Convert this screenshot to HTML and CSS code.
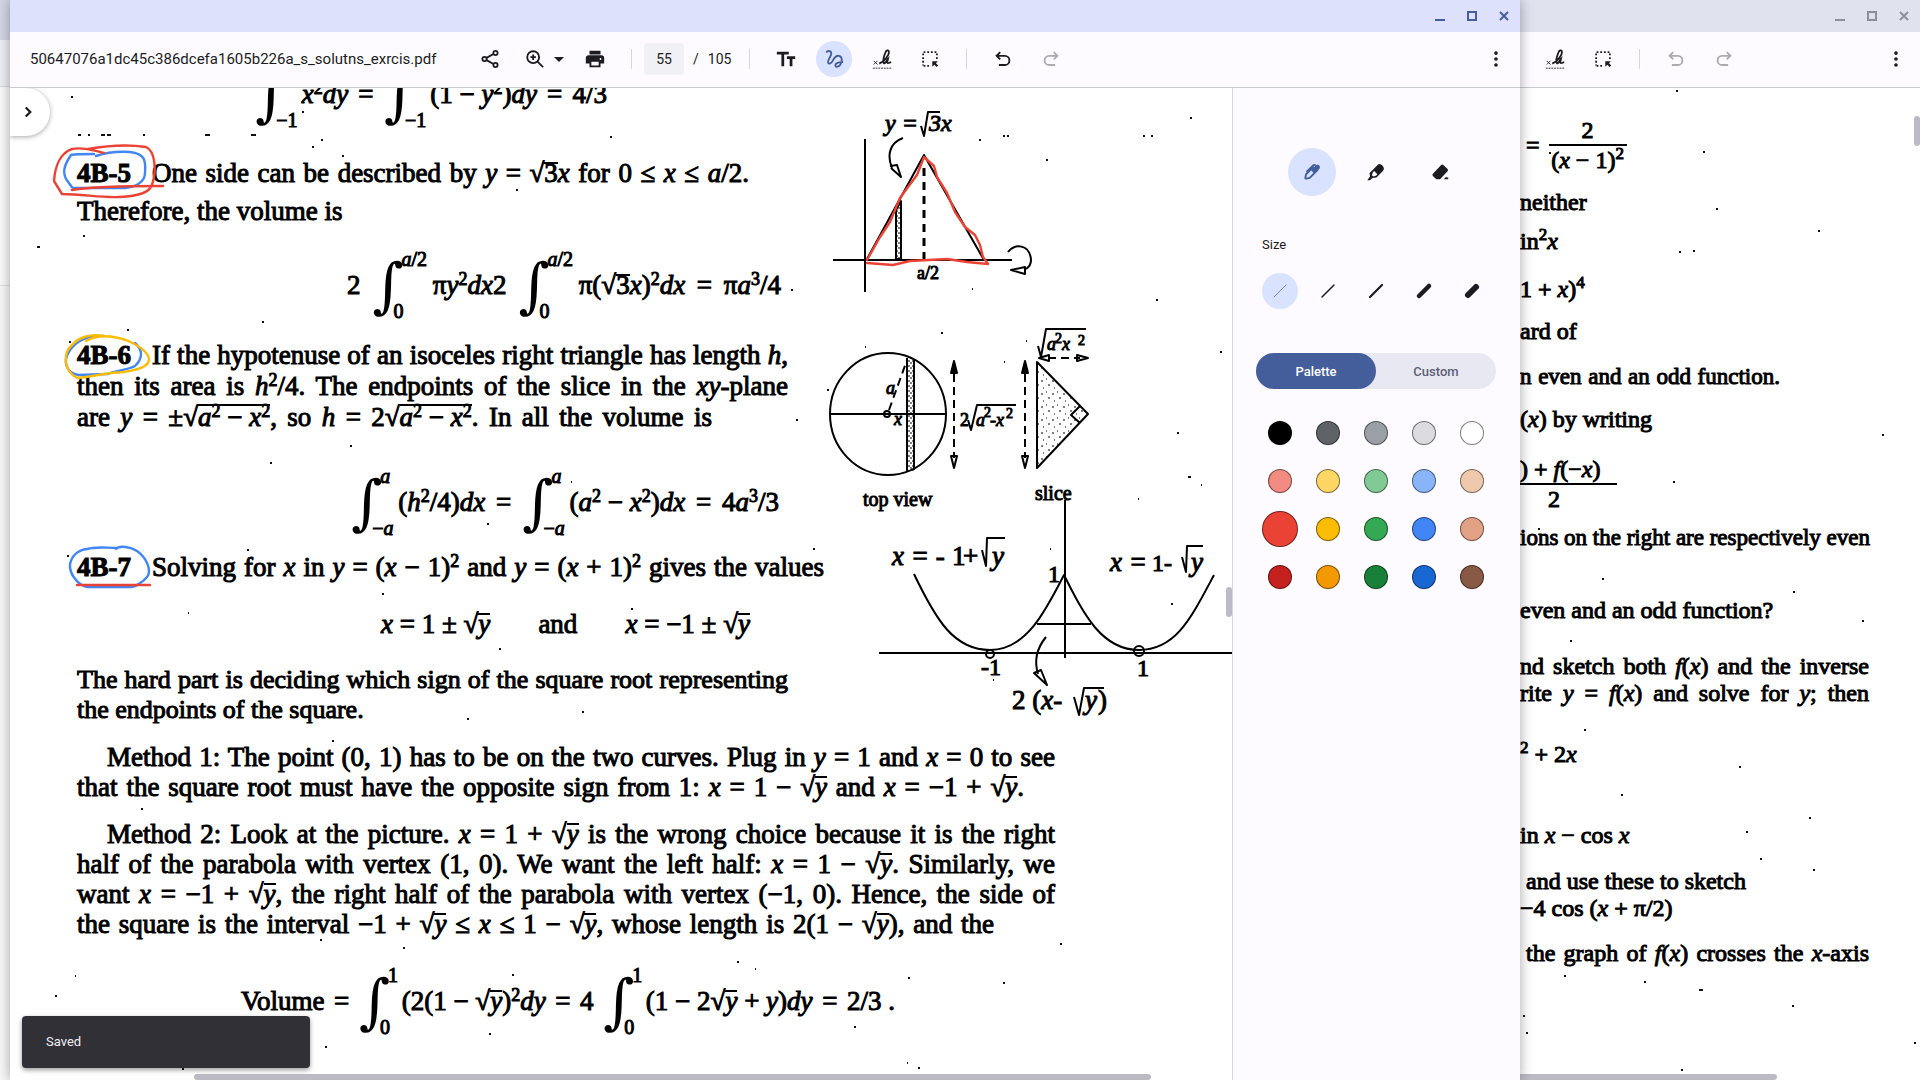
FILE: index.html
```
<!DOCTYPE html>
<html lang="en">
<head>
<meta charset="utf-8">
<title>50647076a1dc45c386dcefa1605b226a_s_solutns_exrcis.pdf</title>
<link rel="stylesheet" href="styles.css">
</head>
<body>
<svg class="defs" aria-hidden="true">
  <symbol id="i-sign" viewBox="0 0 24 24"><path d="M3 14l4 4M7 14l-4 4" stroke-width="1"/><path d="M9 17c5-2 11-9 10.500-13-.5-2.500-3-1.500-4 1.500-1.500 4-3 9-1.500 11 1.500 1 3-3 4.500-4.500-.5 2-1.500 4.500 0 4.500s1.500-.5 3.500-1" stroke-width="2"/><path d="M2 22h21" stroke-width="1" stroke-dasharray="2 1"/></symbol>
  <symbol id="i-select" viewBox="0 0 24 24"><path d="M5 4.500h15M5 19.500h8M4.500 6v13M19.500 6v7" stroke-width="2" stroke-dasharray="2 2"/><path class="solid" d="M14.500 14.500h6l-2 2 2.500 2.500-1.800 1.800-2.500-2.500-2.200 2.200z"/></symbol>
  <symbol id="i-undo" viewBox="0 0 24 24"><path d="M9 4.500L5 8.500l4 4M5.500 8.500H14a5 5 0 0 1 0 10H7.500" stroke-width="2"/></symbol>
  <symbol id="i-redo" viewBox="0 0 24 24"><path d="M15 4.500l4 4-4 4M18.500 8.500H10a5 5 0 0 0 0 10h6.500" stroke-width="2"/></symbol>
  <symbol id="i-more" viewBox="0 0 24 24"><g class="solid"><circle cx="12" cy="5.500" r="2"/><circle cx="12" cy="12" r="2"/><circle cx="12" cy="18.500" r="2"/></g></symbol>
  <symbol id="i-min" viewBox="0 0 16 16"><path d="M3 12h10" stroke-width="2"/></symbol>
  <symbol id="i-max" viewBox="0 0 16 16"><path d="M4 4h8v8H4z" stroke-width="2"/></symbol>
  <symbol id="i-close" viewBox="0 0 16 16"><path d="M4 4l8 8M12 4l-8 8" stroke-width="2"/></symbol>
</svg>

<div class="edge" aria-hidden="true"></div>

<section class="window window-back">
  <header class="titlebar">
    <button aria-label="Minimize"><svg><use href="#i-min"/></svg></button>
    <button aria-label="Maximize"><svg><use href="#i-max"/></svg></button>
    <button aria-label="Close"><svg><use href="#i-close"/></svg></button>
  </header>
  <div class="toolbar">
    <div class="group">
      <button class="tool" aria-label="Signature"><svg><use href="#i-sign"/></svg></button>
      <button class="tool" aria-label="Select"><svg><use href="#i-select"/></svg></button>
    </div>
    <span class="divider"></span>
    <div class="group">
      <button class="tool" aria-label="Undo" disabled><svg><use href="#i-undo"/></svg></button>
      <button class="tool" aria-label="Redo" disabled><svg><use href="#i-redo"/></svg></button>
    </div>
    <button class="tool more" aria-label="More"><svg><use href="#i-more"/></svg></button>
  </div>
  <main class="viewer">
    <article class="exercises">
      <p class="with-frac g28 in6"><span>=</span><span class="frac wide"><span>2</span><span>(<i>x</i> − 1)<sup>2</sup></span></span></p>
      <p class="g14">neither</p>
      <p class="g11">in<sup>2</sup><i>x</i></p>
      <p class="g20">1 + <i>x</i>)<sup>4</sup></p>
      <p class="g14">ard of</p>
      <p class="g18 fill w260 snug">n even and an odd function.</p>
      <p class="g14">(<i>x</i>) by writing</p>
      <p class="with-frac g22"><span class="frac cut"><span>) + <i>f</i>(−<i>x</i>)</span><span class="den">2</span></span></p>
      <p class="g11 fill w348 snug">ions on the right are respectively even</p>
      <p class="g44">even and an odd function?</p>
      <p class="g28 fill w348">nd sketch both <i>f</i>(<i>x</i>) and the inverse</p>
      <p class="tight fill w348">rite <i>y</i> = <i>f</i>(<i>x</i>) and solve for <i>y</i>; then</p>
      <p class="g34"><sup>2</sup> + 2<i>x</i></p>
      <p class="g53">in <i>x</i> − cos <i>x</i></p>
      <p class="g18 in6">and use these to sketch</p>
      <p class="tight">−4 cos (<i>x</i> + π/2)</p>
      <p class="g18 in6 fill w348">the graph of <i>f</i>(<i>x</i>) crosses the <i>x</i>-axis</p>
    </article>
    <svg class="overlay" width="400" height="992" viewBox="1520 88 400 992" aria-hidden="true">
      <path class="specks" d="M1676 91h2M1703 152h2M1716 209h2M1818 231h2M1679 252h2M1693 251h2M1549 153h2M1882 435h2M1673 482h2M1538 529h2M1602 579h2M1793 592h2M1862 621h2M1570 641h2M1584 730h2M1739 767h2M1621 795h2M1809 818h2M1746 832h2M1760 859h2M1813 870h2M1564 976h2M1644 982h2M1699 990h4M1792 1006h2M1523 1016h2M1526 1033h2M1914 1043h2M1681 1070h2"/>
    </svg>
    <span class="thumb thumb-v"></span><span class="thumb thumb-h"></span>
  </main>
</section>

<section class="window window-front">
  <header class="titlebar">
    <button aria-label="Minimize"><svg><use href="#i-min"/></svg></button>
    <button aria-label="Maximize"><svg><use href="#i-max"/></svg></button>
    <button aria-label="Close"><svg><use href="#i-close"/></svg></button>
  </header>
  <div class="toolbar">
    <h1 class="filename">50647076a1dc45c386dcefa1605b226a_s_solutns_exrcis.pdf</h1>
    <div class="group file-group">
      <button class="tool" aria-label="Share"><svg viewBox="0 0 24 24"><g stroke-width="2"><circle cx="18" cy="5.500" r="2.300"/><circle cx="18" cy="18.500" r="2.300"/><circle cx="6" cy="12" r="2.300"/><path d="M8.200 10.800l7.600-4.200M8.200 13.200l7.600 4.200"/></g></svg></button>
      <button class="tool" aria-label="Zoom in"><svg viewBox="0 0 24 24"><circle cx="10" cy="10" r="6.500" stroke-width="2"/><path d="M14.800 14.800l6 6M10 7v6M7 10h6" stroke-width="2"/></svg></button>
      <button class="tool caret" aria-label="Zoom options"><svg viewBox="0 0 12 12"><path class="solid" d="M1 4h10L6 9z"/></svg></button>
      <button class="tool print" aria-label="Print"><svg viewBox="0 0 24 24"><path class="solid" d="M6 3h12v4H6zM5 8h14a3 3 0 0 1 3 3v6h-4v4H6v-4H2v-6a3 3 0 0 1 3-3zm3 7v4h8v-4zm10-4a1 1 0 1 0 0 2 1 1 0 0 0 0-2z" fill-rule="evenodd"/></svg></button>
    </div>
    <span class="divider"></span>
    <div class="pager"><input type="text" value="55" aria-label="Page number"><span>/</span><span>105</span></div>
    <span class="divider"></span>
    <div class="group">
      <button class="tool" aria-label="Text"><svg viewBox="0 0 24 24"><path class="solid" d="M2 4h13v3h-5v13H7V7H2zM13 9h9v3h-3v8h-3v-8h-3z"/></svg></button>
      <button class="tool active" aria-label="Draw"><svg viewBox="0 0 24 24"><path d="M3.500 5c2-3 6-1.500 5.500 1.500-.5 3.500-4 6-3.500 9 .5 2.500 3.500 1.500 5-1.500s4-6 7-5.500c4 1 3.500 6 1.500 9.500-1.500 2.500-5 3.500-5.500 1.200-.5-2.700 4-4.200 8.500-3.700" stroke-width="2"/></svg></button>
      <button class="tool" aria-label="Signature"><svg><use href="#i-sign"/></svg></button>
      <button class="tool" aria-label="Select"><svg><use href="#i-select"/></svg></button>
    </div>
    <span class="divider"></span>
    <div class="group">
      <button class="tool" aria-label="Undo"><svg><use href="#i-undo"/></svg></button>
      <button class="tool" aria-label="Redo" disabled><svg><use href="#i-redo"/></svg></button>
    </div>
    <button class="tool more" aria-label="More"><svg><use href="#i-more"/></svg></button>
  </div>

  <div class="body">
    <main class="viewer">
      <article class="solutions">
        <div class="formula f0"><span class="int"><b>∫</b><span class="lim"><span></span><span>−1</span></span></span><span><i>x</i><sup>2</sup><i>dy</i></span><span>=</span><span class="int"><b>∫</b><span class="lim"><span></span><span>−1</span></span></span><span>(1 − <i>y</i><sup>2</sup>)<i>dy</i></span><span>=</span><span>4/3</span></div>

        <p class="s1"><span class="line item w672"><strong>4B-5</strong><span class="fill">One side can be described by <i>y</i> = √<span class="rad">3</span><i>x</i> for 0 ≤ <i>x</i> ≤ <i>a</i>/2.</span></span></p>
        <p class="s2"><span class="line">Therefore, the volume is</span></p>
        <div class="formula f1"><span>2</span><span class="int"><b>∫</b><span class="lim"><span><i>a</i>/2</span><span>0</span></span></span><span>π<i>y</i><sup>2</sup><i>dx</i>2</span><span class="int"><b>∫</b><span class="lim"><span><i>a</i>/2</span><span>0</span></span></span><span>π(√<span class="rad">3</span><i>x</i>)<sup>2</sup><i>dx</i></span><span>=</span><span>π<i>a</i><sup>3</sup>/4</span></div>

        <p class="s3">
          <span class="line item w711"><strong>4B-6</strong><span class="fill">If the hypotenuse of an isoceles right triangle has length <i>h</i>,</span></span>
          <span class="line fill w711">then its area is <i>h</i><sup>2</sup>/4. The endpoints of the slice in the <i>xy</i>-plane</span>
          <span class="line fill w635">are <i>y</i> = ±√<span class="rad tall"><i>a</i><sup>2</sup> − <i>x</i><sup>2</sup></span>, so <i>h</i> = 2√<span class="rad tall"><i>a</i><sup>2</sup> − <i>x</i><sup>2</sup></span>. In all the volume is</span>
        </p>
        <div class="formula f2"><span class="int"><b>∫</b><span class="lim"><span><i>a</i></span><span>−<i>a</i></span></span></span><span>(<i>h</i><sup>2</sup>/4)<i>dx</i></span><span>=</span><span class="int"><b>∫</b><span class="lim"><span><i>a</i></span><span>−<i>a</i></span></span></span><span>(<i>a</i><sup>2</sup> − <i>x</i><sup>2</sup>)<i>dx</i></span><span>=</span><span>4<i>a</i><sup>3</sup>/3</span></div>

        <p class="s4"><span class="line item w747"><strong>4B-7</strong><span class="fill">Solving for <i>x</i> in <i>y</i> = (<i>x</i> − 1)<sup>2</sup> and <i>y</i> = (<i>x</i> + 1)<sup>2</sup> gives the values</span></span></p>
        <div class="formula f3"><span><i>x</i> = 1 ± √<span class="rad"><i>y</i></span></span><span>and</span><span><i>x</i> = −1 ± √<span class="rad"><i>y</i></span></span></div>
        <p class="s5">
          <span class="line fill w711">The hard part is deciding which sign of the square root representing</span>
          <span class="line">the endpoints of the square.</span>
        </p>
        <p class="s6">
          <span class="line fill indent w977">Method 1: The point (0, 1) has to be on the two curves. Plug in <i>y</i> = 1 and <i>x</i> = 0 to see</span>
          <span class="line fill w947">that the square root must have the opposite sign from 1: <i>x</i> = 1 − √<span class="rad"><i>y</i></span> and <i>x</i> = −1 + √<span class="rad"><i>y</i></span>.</span>
        </p>
        <p class="s6">
          <span class="line fill indent w977">Method 2: Look at the picture. <i>x</i> = 1 + √<span class="rad"><i>y</i></span> is the wrong choice because it is the right</span>
          <span class="line fill w977">half of the parabola with vertex (1, 0). We want the left half: <i>x</i> = 1 − √<span class="rad"><i>y</i></span>. Similarly, we</span>
          <span class="line fill w977">want <i>x</i> = −1 + √<span class="rad"><i>y</i></span>, the right half of the parabola with vertex (−1, 0). Hence, the side of</span>
          <span class="line fill w917">the square is the interval −1 + √<span class="rad"><i>y</i></span> ≤ <i>x</i> ≤ 1 − √<span class="rad"><i>y</i></span>, whose length is 2(1 − √<span class="rad"><i>y</i></span>), and the</span>
        </p>
        <div class="formula f4"><span>Volume</span><span>=</span><span class="int"><b>∫</b><span class="lim"><span>1</span><span>0</span></span></span><span>(2(1 − √<span class="rad"><i>y</i></span>)<sup>2</sup><i>dy</i></span><span>=</span><span>4</span><span class="int"><b>∫</b><span class="lim"><span>1</span><span>0</span></span></span><span>(1 − 2√<span class="rad"><i>y</i></span> + <i>y</i>)<i>dy</i></span><span>=</span><span>2/3 .</span></div>
      </article>

      <svg class="overlay" width="1222" height="992" viewBox="10 88 1222 992" role="img" aria-label="Figures and pen marks">
        <defs>
          <pattern id="dots" width="11" height="13" patternUnits="userSpaceOnUse"><path d="M1 2h1M7 4h2M3 8h2M9 11h1" stroke="#000" stroke-width="1"/></pattern>
          <pattern id="dense" width="4" height="5" patternUnits="userSpaceOnUse"><path d="M0 1h2M2 3h2" stroke="#000" stroke-width="1"/></pattern>
        </defs>
        <path class="specks" d="M71 97h2M302 112h2M78 135h3M88 135h2M101 135h4M107 135h4M143 135h2M205 135h5M251 135h5M321 140h2M312 147h2M342 156h2M610 137h2M516 190h2M83 236h2M37 247h3M262 322h2M979 140h2M1003 136h2M1007 136h2M1143 136h2M1151 136h2M1190 118h2M1046 160h2M972 289h1M1156 300h2M941 333h2M865 347h1M1004 362h1M1220 352h2M1177 433h2M1188 477h3M1201 485h1M1138 499h1M1050 549h1M1171 604h2M993 680h1M1026 341h1M827 390h2M796 420h2M350 446h2M270 463h2M571 482h1M487 524h2M813 549h2M382 594h2M188 613h1M247 550h2M67 556h2M127 330h2M69 342h2M499 649h2M467 719h2M582 712h2M332 741h2M141 809h2M631 609h2M403 948h2M320 940h2M737 962h2M755 969h1M512 975h2M908 978h2M1003 983h2M1060 944h2M489 1034h2M854 1027h2M325 1047h2M907 1063h1M918 1068h2M182 1069h2M55 996h2M75 976h1M791 290h2"/>
        <g class="fig">
          <path d="M865 139v153M833 260h179M867 259l57-104 60 105"/>
          <path d="M924 168v92" stroke-dasharray="8 6" stroke-width="3"/>
          <path d="M896 210l5-9v58h-5z" fill="url(#dense)"/>
          <path d="M903 138c-14 5-16 18-11 30M891 168l10 9-4-12-7 1M1008 252c6-9 22-8 23 8 0 4-2 7-5 9M1011 270l14-3v7z"/>
          <ellipse cx="888" cy="414" rx="58" ry="61"/>
          <path d="M830 414h117M907 358v113M914 359v111"/><path d="M907 358h7v113h-7z" fill="url(#dense)" stroke="none"/>
          <circle cx="887" cy="414" r="3"/>
          <path d="M889 410l18-50M954 374v84M1025 374v84M1048 358h32" stroke-dasharray="8 5"/>
          <path class="ink" d="M954 361l3 12h-6zM1025 361l3 12h-6z"/><path d="M954 468l3-12h-6zM1025 468l3-12h-6zM1039 358l10-3v6zM1088 358l-11-3v6z"/>
          <path d="M1037 362l51 52-51 54z" fill="url(#dots)"/><path d="M1080 406l-9 9 9 8"/>
          <path d="M1038 346l3 11 5-28h40M968 420l3 10 6-25h39"/>
          <path d="M1065 500v158M879 653h353M1037 624h54"/>
          <path d="M914 574c22 46 40 76 76 76s55-38 74-75c20 40 38 75 75 75s52-32 75-75"/>
          <circle cx="990" cy="654" r="4"/><circle cx="1139" cy="651" r="5"/>
          <path d="M1046 637c-9 11-12 24-8 37M1034 673l13 12-6-15z"/>
          <path d="M921 126l3 10 4-24h12M982 550l4 16 1-28h18M1182 557l4 15 1-26h16M1074 697l5 18 5-27h20"/>
        </g>
        <g class="figtext">
          <text x="885" y="131" class="it t24">y =</text><text x="929" y="131" class="it t24">3x</text>
          <text x="917" y="279" class="t18">a/2</text>
          <text x="886" y="394" class="it t18">a</text><text x="894" y="425" class="it t18">x</text>
          <text x="960" y="426" class="t18">2</text><text x="976" y="426" class="it t18">a</text><text x="984" y="417" class="t14">2</text><text x="990" y="426" class="it t18">-x</text><text x="1006" y="418" class="t14">2</text>
          <text x="1047" y="350" class="it t18">a</text><text x="1055" y="343" class="t14">2</text><text x="1062" y="350" class="it t18">x</text><text x="1078" y="345" class="t14">2</text>
          <text x="863" y="506" class="t20">top view</text><text x="1035" y="500" class="t20">slice</text>
          <text x="892" y="565" class="it t27">x = -</text><text x="952" y="565" class="t27">1</text><text x="963" y="565" class="t27">+</text><text x="992" y="565" class="it t27">y</text>
          <text x="1110" y="571" class="it t27">x =</text><text x="1152" y="571" class="t24">1-</text><text x="1191" y="571" class="it t27">y</text>
          <text x="1048" y="582" class="t24">1</text><text x="981" y="675" class="t24">-1</text><text x="1137" y="676" class="t24">1</text>
          <text x="1012" y="709" class="t27">2 (<tspan class="it">x</tspan>-</text><text x="1085" y="709" class="it t27">y</text><text x="1098" y="709" class="t27">)</text>
        </g>
        <g class="pen">
          <path class="blue" d="M94 154c-12 0-18 0-23 1-6 9-9 16-5 24 4 5 5 8 7 9h52c12-1 20-7 20-15 1-13 0-19-15-21-14-1-25 1-34 4"/>
          <path class="red" d="M104 153c-12-3-22-6-32-4-12 4-17 18-18 32l8 13c22 0 38 4 58 3 20-1 30-6 32-12 5-15 3-34-6-38-20-3-41-1-58 2M72 190c23-4 58-4 91-4"/>
          <path class="blue" d="M104 336c-18-1-28 6-34 14-9 13-2 23 8 25l30-1c6-3 20-4 27-8 8-8 8-16 0-23"/>
          <path class="gold" d="M86 341c12-7 28-5 40-1 14 6 23 13 23 20-1 8-15 10-25 12-20 1-28 4-47 6-14-8-14-25-5-33 6-7 18-12 31-9"/>
          <path class="blue" d="M116 549c3-4 15-2 21 2 10 7 15 20 10 26-4 5-12 10-16 10H87c-9-2-18-13-17-23 2-9 9-14 17-15 10-3 19-1 30-1"/>
          <path class="red" d="M77 585h73M867 260L880 237 890 222 900 198 908 187 917 175 924 157 934 166 937 177 947 193 955 212 965 227 975 235 980 245 983 257 988 264 967 262 947 259 910 261 893 265 867 263"/>
        </g>
      </svg>
      <button class="expand" aria-label="Open sidebar"><svg viewBox="0 0 16 16"><path d="M6 4l4 4-4 4" stroke-width="2"/></svg></button>
      <span class="thumb thumb-v"></span><span class="thumb thumb-h"></span>
      <div class="toast" role="status">Saved</div>
    </main>

    <aside class="panel">
      <div class="brushes">
        <button class="active" aria-label="Pen"><svg viewBox="0 0 24 24"><path d="M4.500 19.500l1-5L14 6M4.500 19.500l5-1 9-9M6 12l7-7c1-1 2-1 3 0" stroke-width="2"/><path class="solid" d="M11 10l5-5c1-1.500 4-1 4.500 1s-.5 2.500-1 3l-5 5z"/></svg></button>
        <button aria-label="Highlighter"><svg viewBox="0 0 24 24"><path class="solid" fill-rule="evenodd" d="M14 4c2-2.500 7.500 2 6.500 5-.2 1-1 2-1.500 2.500L12.500 18l-4.500.5L5.500 21H2.500l3-4-.5-4zM8.500 12.500l-1 3 1.500 1.500 3-1 1.500-1.500-3.500-3.500z"/></svg></button>
        <button aria-label="Eraser"><svg viewBox="0 0 24 24"><path class="solid" d="M13 4.500c1-1 2-1 3 0l4 4c1 1 1 2 0 3L12 20H8l-3.500-3.500c-1-1-1-2 0-3zM16 20l3-3v1h2v2z"/></svg></button>
      </div>
      <fieldset class="sizes">
        <legend>Size</legend>
        <label><input type="radio" name="size" aria-label="Extra thin" checked><svg viewBox="0 0 24 24"><path d="M6 18L18 6" stroke-width="1"/></svg></label>
        <label><input type="radio" name="size" aria-label="Thin"><svg viewBox="0 0 24 24"><path d="M6 18L18 6" stroke-width="1.500"/></svg></label>
        <label><input type="radio" name="size" aria-label="Medium"><svg viewBox="0 0 24 24"><path d="M6 18L18 6" stroke-width="2.200"/></svg></label>
        <label><input type="radio" name="size" aria-label="Thick"><svg viewBox="0 0 24 24"><path d="M7 17L17 7" stroke-width="4.500"/></svg></label>
        <label><input type="radio" name="size" aria-label="Extra thick"><svg viewBox="0 0 24 24"><path d="M8 16l8-8" stroke-width="6"/></svg></label>
      </fieldset>
      <div class="tabs"><button class="on">Palette</button><button>Custom</button></div>
      <div class="swatches">
        <input type="radio" name="color" aria-label="Black" class="c-black"><input type="radio" name="color" aria-label="Dark grey" class="c-dgrey"><input type="radio" name="color" aria-label="Grey" class="c-grey"><input type="radio" name="color" aria-label="Light grey" class="c-lgrey"><input type="radio" name="color" aria-label="White" class="c-white">
        <input type="radio" name="color" aria-label="Light red" class="c-lred"><input type="radio" name="color" aria-label="Light yellow" class="c-lyellow"><input type="radio" name="color" aria-label="Light green" class="c-lgreen"><input type="radio" name="color" aria-label="Light blue" class="c-lblue"><input type="radio" name="color" aria-label="Sand" class="c-sand">
        <input type="radio" name="color" aria-label="Red" class="c-red" checked><input type="radio" name="color" aria-label="Yellow" class="c-yellow"><input type="radio" name="color" aria-label="Green" class="c-green"><input type="radio" name="color" aria-label="Blue" class="c-blue"><input type="radio" name="color" aria-label="Tan" class="c-tan">
        <input type="radio" name="color" aria-label="Dark red" class="c-dred"><input type="radio" name="color" aria-label="Orange" class="c-orange"><input type="radio" name="color" aria-label="Dark green" class="c-dgreen"><input type="radio" name="color" aria-label="Dark blue" class="c-dblue"><input type="radio" name="color" aria-label="Brown" class="c-brown">
      </div>
    </aside>
  </div>
</section>
</body>
</html>
```
FILE: styles.css
```
* { box-sizing: border-box; }
body {
  margin: 0;
  height: 100vh;
  position: relative;
  overflow: hidden;
  background: #fff;
  font-family: Roboto, "Liberation Sans", sans-serif;
  color: #1b1b21;
}
p, h1, fieldset { margin: 0; padding: 0; border: 0; font-weight: 400; }
button { border: 0; padding: 0; background: none; color: inherit; font: inherit; }
svg { fill: none; stroke: currentColor; }
.solid { fill: currentColor; stroke: none; }
.defs { position: absolute; width: 0; height: 0; }

/* Slice of the window stacked furthest back */
.edge {
  position: absolute;
  inset: 0 auto 0 0;
  width: 10px;
  background: linear-gradient(#d3d7e6 0 40px, #eeeef6 40px 86px, #d6d6e0 86px 87px, #fafafa 87px 285px, #dedee4 285px 286px, #f8f8f9 286px);
}

/* Windows */
.window { position: absolute; top: 0; bottom: 0; display: flex; flex-direction: column; }
.window-back { left: calc(100% - 400px); right: 0; }
.window-front { left: 10px; right: 400px; box-shadow: 0 0 12px rgba(0, 0, 0, .35); }
.titlebar {
  height: 32px;
  flex: none;
  display: flex;
  justify-content: flex-end;
  background: #dde1fb;
  color: #435e9a;
}
.window-back .titlebar { background: #e0e2ee; color: #8d8e98; }
.titlebar button { width: 32px; display: grid; place-items: center; }
.titlebar svg { width: 16px; height: 16px; }
.toolbar {
  height: 56px;
  flex: none;
  display: flex;
  align-items: center;
  padding: 0 6px 2px 20px;
  background: #fdfbff;
  border-bottom: 1px solid #cbcbd2;
}
.window-back .toolbar { padding-left: 17px; }
.filename { width: 442px; font-size: 15px; white-space: nowrap; }
.group { display: flex; gap: 12px; }
.file-group { gap: 9px; }
.tool { width: 36px; height: 36px; border-radius: 50%; display: grid; place-items: center; }
.tool svg { width: 22px; height: 22px; }
.tool.caret { width: 12px; margin-left: -9px; }
.tool.caret svg { width: 12px; height: 12px; }
.tool.print { margin-left: 3px; }
.tool.active { background: #d9e2ff; color: #435e9a; }
.tool:disabled { color: #acabb1; }
.more { margin-left: auto; }
.divider { width: 1px; height: 20px; margin: 0 18px; background: #d6d6dd; }
.pager { display: flex; align-items: center; gap: 9px; margin-left: -6px; font-size: 14px; }
.pager input {
  width: 40px;
  height: 32px;
  border: 0;
  border-radius: 4px;
  background: #f1f0f7;
  text-align: center;
  font: inherit;
  color: inherit;
}
.body { flex: 1; display: flex; min-height: 0; }
.viewer { flex: 1; min-width: 0; position: relative; overflow: hidden; background: #fff; }
.overlay { position: absolute; top: 0; left: 0; }
.thumb { position: absolute; background: #bcbbc3; border-radius: 3px; }
.thumb-v { right: 0; width: 6px; height: 30px; top: 499px; }
.thumb-h { bottom: 0; height: 6px; left: 184px; right: 81px; }
.window-back .thumb-v { top: 28px; }
.window-back .thumb-h { left: 0; right: 143px; border-radius: 0 3px 3px 0; }

/* Scanned text */
article { font-family: "Liberation Serif", serif; color: #000; white-space: nowrap; -webkit-text-stroke: 1px #000; }
sup { font-size: 18px; line-height: 0; vertical-align: 9px; }
.fill { text-align-last: justify; }
.solutions { padding-left: 67px; font-size: 27px; line-height: 30px; }
.line { display: block; height: 30px; }
.item { display: flex; }
.item strong { width: 75px; }
.item .fill { flex: 1; }
.indent { padding-left: 30px; }
.rad { display: inline-block; line-height: 18px; border-top: 2px solid #000; }
.rad.tall { line-height: 22px; }
.formula { height: 30px; display: flex; align-items: center; justify-content: space-between; }
.int { display: flex; align-items: center; margin-right: -6px; }
.int b { font: 400 60px/66px "DejaVu Serif", serif; -webkit-text-stroke: 0; }
.lim { height: 72px; display: flex; flex-direction: column; justify-content: space-between; font-size: 20px; line-height: 20px; margin-left: -10px; }
.lim span:first-child { padding-left: 8px; }
.w635 { width: 635px; }
.w672 { width: 672px; }
.w711 { width: 711px; }
.w747 { width: 747px; }
.w917 { width: 917px; }
.w947 { width: 947px; }
.w977 { width: 978px; }
.f0 { margin: -9px 0 0 178px; width: 352px; }
.s1 { margin-top: 49px; }
.s2 { margin-top: 8px; }
.f1 { margin: 44px 0 0 270px; width: 434px; }
.s3 { margin-top: 40px; }
.s3 .line { height: 31px; }
.f2 { margin: 54px 0 0 274px; width: 428px; }
.s4 { margin-top: 35px; }
.f3 { margin: 27px 0 0 304px; width: 369px; }
.s5 { margin-top: 26px; font-size: 26px; }
.s6 { margin-top: 17px; }
.f4 { margin: 47px 0 0 164px; width: 654px; }

.exercises { display: flow-root; font-size: 24px; line-height: 28px; }
.exercises p { height: 28px; }
.exercises .with-frac { height: 58px; display: flex; align-items: center; gap: 9px; }
.exercises .tight { height: 26px; line-height: 26px; }
.exercises .snug { font-size: 23px; }
.exercises sup { font-size: 17px; }
.frac { display: flex; flex-direction: column; text-align: center; }
.frac > :last-child { border-top: 2px solid #000; }
.frac.wide { width: 78px; }
.frac.cut { width: 97px; text-align: left; }
.frac .den { padding-left: 28px; }
.in6 { padding-left: 6px; }
.w260 { width: 260px; }
.w348 { width: 349px; }
.g11 { margin-top: 11px; }
.g14 { margin-top: 14px; }
.g18 { margin-top: 18px; }
.g20 { margin-top: 20px; }
.g22 { margin-top: 22px; }
.g28 { margin-top: 28px; }
.g34 { margin-top: 34px; }
.g44 { margin-top: 44px; }
.g53 { margin-top: 53px; }

/* Figures and ink */
.specks { stroke: #111; stroke-width: 2; }
.fig { stroke: #000; stroke-width: 2; stroke-linejoin: round; }
.ink { fill: #000; }
.figtext { fill: #000; stroke: #000; stroke-width: 1; font-family: "Liberation Serif", serif; }
.it { font-style: italic; }
.t14 { font-size: 14px; }
.t18 { font-size: 18px; }
.t20 { font-size: 20px; }
.t24 { font-size: 24px; }
.t27 { font-size: 27px; }
.pen { stroke-width: 2.400; stroke-linecap: round; stroke-linejoin: round; }
.blue { stroke: #4285f4; }
.red { stroke: #ea4335; }
.gold { stroke: #fbbc04; }

.expand {
  position: absolute;
  top: 0;
  left: 0;
  width: 40px;
  height: 48px;
  padding-right: 4px;
  border-radius: 0 24px 24px 0;
  background: #fff;
  box-shadow: 0 1px 5px rgba(0, 0, 0, .35);
  display: grid;
  place-items: center;
}
.expand svg { width: 18px; height: 18px; }
.toast {
  position: absolute;
  left: 12px;
  bottom: 12px;
  width: 288px;
  height: 52px;
  padding: 0 24px;
  border-radius: 4px;
  background: #303036;
  color: #f2f0f7;
  font-size: 13px;
  line-height: 52px;
  box-shadow: 0 2px 5px rgba(0, 0, 0, .4);
}

/* Tool panel */
.panel {
  width: 288px;
  padding: 60px 1px 0 0;
  border-left: 1px solid #d6d6de;
  background: #fdfbff;
  display: flex;
  flex-direction: column;
  align-items: center;
}
.brushes { display: flex; gap: 16px; }
.brushes button { width: 48px; height: 48px; border-radius: 50%; display: grid; place-items: center; }
.brushes svg { width: 22px; height: 22px; }
.brushes .active { background: #d9e2ff; color: #435e9a; }
.sizes { margin-top: 39px; display: flex; gap: 12px; }
.sizes legend { padding: 0; margin-bottom: 18px; font-size: 13px; line-height: 20px; }
.sizes label { width: 36px; height: 36px; border-radius: 50%; display: grid; place-items: center; }
.sizes label:has(:checked) { background: #d9e2ff; color: #7389bd; }
.sizes input { appearance: none; position: absolute; margin: 0; }
.sizes svg { width: 24px; height: 24px; stroke-linecap: round; }
.tabs { margin-top: 44px; width: 240px; height: 36px; display: flex; border-radius: 18px; background: #e7e8f1; }
.tabs button { flex: 1; border-radius: 18px; font-size: 13px; font-weight: 500; color: #5d6074; }
.tabs .on { background: #435e9a; color: #fff; }
.swatches { margin-top: 26px; display: grid; grid-template-columns: repeat(5, 36px); grid-auto-rows: 36px; gap: 12px; place-items: center; }
.swatches input { appearance: none; margin: 0; width: 24px; height: 24px; border-radius: 50%; border: 1px solid rgba(0, 0, 0, .5); background-clip: border-box; }
.swatches input:checked { width: 36px; height: 36px; }
.c-black { background: #000; }
.c-dgrey { background: #5f6368; }
.c-grey { background: #9aa0a6; }
.c-lgrey { background: #dadce0; }
.c-white { background: #fff; }
.c-lred { background: #f28b82; }
.c-lyellow { background: #fdd663; }
.c-lgreen { background: #81c995; }
.c-lblue { background: #8ab4f8; }
.c-sand { background: #eec9ae; }
.c-red { background: #ea4335; }
.c-yellow { background: #fbbc04; }
.c-green { background: #34a853; }
.c-blue { background: #4285f4; }
.c-tan { background: #e2a185; }
.c-dred { background: #c5221f; }
.c-orange { background: #f29900; }
.c-dgreen { background: #188038; }
.c-dblue { background: #1967d2; }
.c-brown { background: #885945; }
```
